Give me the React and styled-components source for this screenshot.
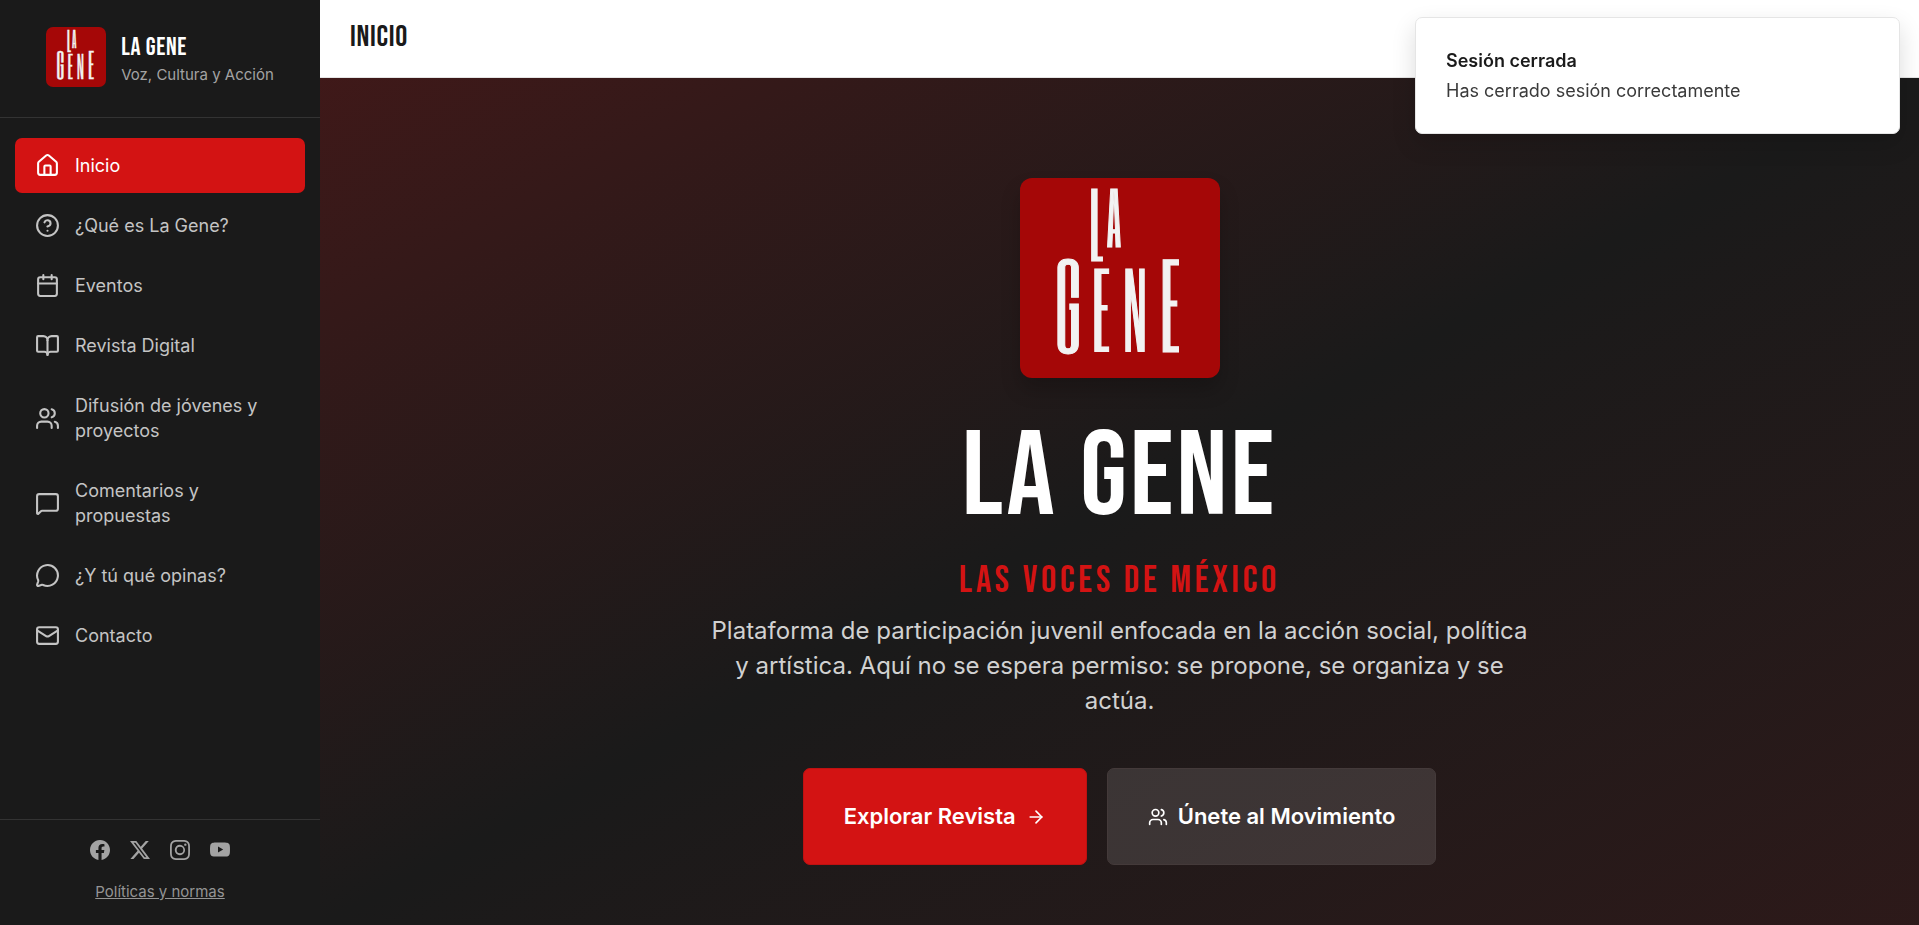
import React from 'react';
import styled, { createGlobalStyle } from 'styled-components';
import {
  ArrowRight,
  BookOpen,
  Calendar,
  CircleHelp,
  House,
  Mail,
  MessageCircle,
  MessageSquare,
  Users,
} from 'lucide-react';
import { BsFacebook, BsInstagram, BsTwitterX, BsYoutube } from 'react-icons/bs';

const GlobalStyles = createGlobalStyle`
  :root {
    --red: #d31313;
    --logo: #a50707;
    --dark: #1a1a1a;
    --line: #333333;
  }
  * {
    box-sizing: border-box;
  }
  body {
    margin: 0;
    font-family: Inter, 'Liberation Sans', sans-serif;
    background: var(--dark);
  }
  h1, h2, p {
    margin: 0;
  }
`;

const PageStyles = styled.div`
  display: grid;
  grid-template-columns: 320px 1fr;
  height: 100vh;
`;

const SidebarStyles = styled.aside`
  display: flex;
  flex-direction: column;
  background: var(--dark);
`;

const BrandStyles = styled.div`
  display: flex;
  justify-content: center;
  align-items: flex-end;
  gap: 15px;
  padding: 27px 15px 30px;
  border-bottom: 1px solid var(--line);
  .brand__name {
    font-family: 'Bebas Neue', Oswald, sans-serif;
    font-size: 25px;
    line-height: 28px;
    letter-spacing: 0.025em;
    color: #fff;
  }
  .brand__tagline {
    font-size: 15px;
    line-height: 25px;
    color: #a3a3a3;
  }
`;

const NavStyles = styled.nav`
  flex: 1;
  display: flex;
  flex-direction: column;
  gap: 5px;
  padding: 20px 15px;
`;

const NavLink = styled.a`
  display: flex;
  align-items: center;
  gap: 15px;
  padding: 15px 20px;
  border-radius: 7px;
  font-size: 18px;
  line-height: 25px;
  text-decoration: none;
  color: ${(props) => (props.$active ? '#fff' : '#c4c4c4')};
  background: ${(props) => (props.$active ? 'var(--red)' : 'none')};
  svg {
    flex-shrink: 0;
  }
`;

const SidebarFooter = styled.footer`
  display: flex;
  flex-direction: column;
  align-items: center;
  gap: 20px;
  padding: 20px 20px 21px;
  border-top: 1px solid var(--line);
  .social {
    display: flex;
    gap: 20px;
    a {
      display: flex;
      color: #a3a3a3;
    }
  }
  .policies {
    font-size: 15px;
    line-height: 24px;
    color: #949494;
  }
`;

const MainStyles = styled.main`
  display: flex;
  flex-direction: column;
  overflow-y: auto;
  scrollbar-width: none;
`;

const TopBar = styled.header`
  flex-shrink: 0;
  padding: 19px 30px 21px;
  background: #fff;
  border-bottom: 1px solid #e5e5e5;
  h2 {
    font-family: 'Bebas Neue', Oswald, sans-serif;
    font-weight: 400;
    font-size: 30px;
    line-height: 37px;
    letter-spacing: 0.025em;
    color: var(--dark);
  }
`;

const HeroStyles = styled.section`
  flex: 1 0 auto;
  display: flex;
  flex-direction: column;
  align-items: center;
  padding: 100px 30px 60px;
  text-align: center;
  background: linear-gradient(
    to bottom right,
    rgba(211, 19, 19, 0.2),
    #1a1a1a 50%,
    rgba(211, 19, 19, 0.1)
  );
  h1 {
    margin-top: 40px;
    font-family: 'Bebas Neue', Oswald, sans-serif;
    font-weight: 400;
    font-size: 120px;
    line-height: 120px;
    letter-spacing: 0.025em;
    color: #fff;
  }
  .hero__motto {
    margin-top: 20px;
    font-family: 'Bebas Neue', Oswald, sans-serif;
    font-size: 38px;
    line-height: 45px;
    letter-spacing: 0.1em;
    color: var(--red);
  }
  .hero__text {
    max-width: 830px;
    margin-top: 10px;
    font-size: 24px;
    line-height: 35px;
    color: #d1d1d1;
  }
  .hero__actions {
    display: flex;
    gap: 20px;
    margin-top: 50px;
  }
`;

const HeroButton = styled.button`
  display: flex;
  align-items: center;
  gap: 10px;
  padding: 30px 40px;
  border: 1px solid ${(props) => (props.$primary ? '#be1111' : '#443a3a')};
  border-radius: 7px;
  font-family: inherit;
  font-size: 22px;
  font-weight: 600;
  line-height: 35px;
  color: #fff;
  background: ${(props) =>
    props.$primary ? 'var(--red)' : 'rgba(255, 255, 255, 0.12)'};
`;

const ToastStyles = styled.div`
  position: fixed;
  top: 17px;
  right: 19px;
  width: 485px;
  padding: 30px;
  border: 1px solid #e5e5e5;
  border-radius: 7px;
  background: #fff;
  box-shadow: 0 10px 25px rgba(0, 0, 0, 0.14);
  font-size: 18px;
  line-height: 25px;
  color: #3a3a3a;
  strong {
    display: block;
    margin-bottom: 5px;
    font-weight: 600;
    color: var(--dark);
  }
`;

const LogoStyles = styled.svg`
  display: block;
  flex-shrink: 0;
  overflow: visible;
  border-radius: ${(props) => (props.$large ? '12px' : '7px')};
  box-shadow: ${(props) =>
    props.$large ? '0 12px 20px rgba(0, 0, 0, 0.2)' : 'none'};
  background: var(--logo);
  text {
    font-family: 'Six Caps', 'League Gothic', 'Bebas Neue', sans-serif;
    fill: #f2f2f2;
    stroke: #f2f2f2;
    stroke-width: 1;
    text-anchor: middle;
  }
`;

const Logo = ({ size, large }) => (
  <LogoStyles
    width={size}
    height={size}
    viewBox="0 0 200 200"
    role="img"
    aria-label="La Gene"
    $large={large}
  >
    <text x="77" y="83" fontSize="86">L</text>
    <text x="94" y="69" fontSize="68">A</text>
    <text x="48" y="174" fontSize="109">G</text>
    <text x="81" y="173" fontSize="98">E</text>
    <text x="115" y="173" fontSize="98">N</text>
    <text x="150" y="174" fontSize="109">E</text>
  </LogoStyles>
);

const navItems = [
  { label: 'Inicio', Icon: House, active: true },
  { label: '¿Qué es La Gene?', Icon: CircleHelp },
  { label: 'Eventos', Icon: Calendar },
  { label: 'Revista Digital', Icon: BookOpen },
  { label: 'Difusión de jóvenes y proyectos', Icon: Users },
  { label: 'Comentarios y propuestas', Icon: MessageSquare },
  { label: '¿Y tú qué opinas?', Icon: MessageCircle },
  { label: 'Contacto', Icon: Mail },
];

const socials = [
  { label: 'Facebook', Icon: BsFacebook },
  { label: 'X', Icon: BsTwitterX },
  { label: 'Instagram', Icon: BsInstagram },
  { label: 'YouTube', Icon: BsYoutube },
];

const App = () => (
  <>
    <GlobalStyles />
    <PageStyles>
      <SidebarStyles>
        <BrandStyles>
          <Logo size={60} />
          <div>
            <p className="brand__name">LA GENE</p>
            <p className="brand__tagline">Voz, Cultura y Acción</p>
          </div>
        </BrandStyles>
        <NavStyles>
          {navItems.map(({ label, Icon, active }) => (
            <NavLink key={label} href="#" $active={active}>
              <Icon size={25} />
              {label}
            </NavLink>
          ))}
        </NavStyles>
        <SidebarFooter>
          <div className="social">
            {socials.map(({ label, Icon }) => (
              <a key={label} href="#" aria-label={label}>
                <Icon size={20} />
              </a>
            ))}
          </div>
          <a className="policies" href="#">
            Políticas y normas
          </a>
        </SidebarFooter>
      </SidebarStyles>
      <MainStyles>
        <TopBar>
          <h2>INICIO</h2>
        </TopBar>
        <HeroStyles>
          <Logo size={200} large />
          <h1>LA GENE</h1>
          <p className="hero__motto">LAS VOCES DE MÉXICO</p>
          <p className="hero__text">
            Plataforma de participación juvenil enfocada en la acción social,
            política y artística. Aquí no se espera permiso: se propone, se
            organiza y se actúa.
          </p>
          <div className="hero__actions">
            <HeroButton type="button" $primary>
              Explorar Revista
              <ArrowRight size={20} />
            </HeroButton>
            <HeroButton type="button">
              <Users size={20} />
              Únete al Movimiento
            </HeroButton>
          </div>
        </HeroStyles>
      </MainStyles>
    </PageStyles>
    <ToastStyles role="status">
      <strong>Sesión cerrada</strong>
      Has cerrado sesión correctamente
    </ToastStyles>
  </>
);

export default App;
